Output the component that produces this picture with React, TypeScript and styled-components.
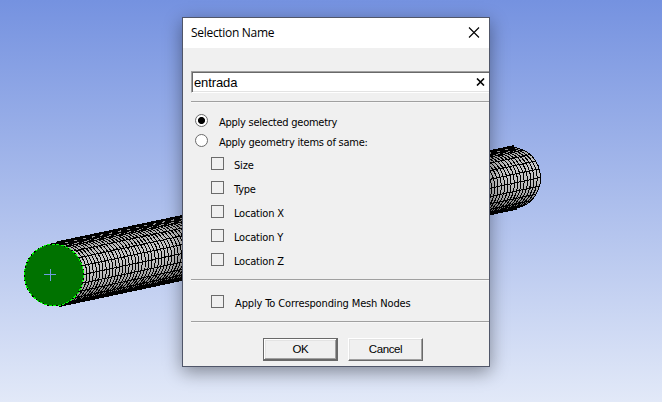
import React, { useState } from 'react';
import styled, { createGlobalStyle } from 'styled-components';

const GlobalStyle = createGlobalStyle`
  * { box-sizing: border-box; }
  body { margin: 0; overflow: hidden; }
`;

const Viewport = styled.main`
  position: relative;
  width: 662px;
  height: 402px;
  overflow: hidden;
  background: linear-gradient(#7592e0, #e2e9f8);
`;

const Scene = styled.svg`
  display: block;
`;

const Dialog = styled.section`
  position: absolute;
  left: 182px;
  top: 17px;
  width: 308px;
  height: 350px;
  display: flex;
  flex-direction: column;
  border: 1px solid #505669;
  background: #f0f0f0;
  color: #000;
  box-shadow: 0 5px 17px rgba(0, 0, 0, 0.4);
  font: 11px/14px 'DejaVu Sans Condensed', 'DejaVu Sans', sans-serif;
  font-stretch: condensed;
`;

const TitleBar = styled.header`
  display: flex;
  align-items: center;
  justify-content: space-between;
  height: 30px;
  padding: 0 9px 0 8px;
  background: #fff;
`;

const Title = styled.h1`
  margin: 0;
  font: 400 12px/16px 'Open Sans', sans-serif;
  letter-spacing: -0.3px;
`;

const IconButton = styled.button`
  display: flex;
  padding: 0;
  border: 0;
  background: none;
  color: #000;
`;

const Body = styled.div`
  display: flex;
  flex-direction: column;
  padding: 23px 0 0 8px;
`;

const NameField = styled.div`
  display: flex;
  align-items: center;
  height: 22px;
  padding: 0 4px 0 1px;
  background: #fff;
  border-style: solid;
  border-color: #a0a0a0 #fff #fff #a0a0a0;
  border-width: 1px 0 1px 1px;
  box-shadow: inset 1px 1px #696969, inset 0 -1px #e3e3e3;
`;

const NameInput = styled.input`
  flex: 1;
  min-width: 0;
  padding: 1px 0 0 1px;
  border: 0;
  outline: 0;
  background: transparent;
  color: #000;
  font: 13px/16px 'Liberation Sans', Arial, sans-serif;
  letter-spacing: -0.12px;
`;

const Rule = styled.hr<{ $gap: number }>`
  width: 100%;
  height: 2px;
  margin: ${(p) => p.$gap}px 0 0;
  border: 0;
  border-top: 1px solid #a0a0a0;
  background: #f7f7f7;
`;

const RadioList = styled.div`
  display: flex;
  flex-direction: column;
  padding: 11px 0 0 4px;
`;

const CheckList = styled.div<{ $top: number }>`
  display: flex;
  flex-direction: column;
  gap: 11px;
  padding: ${(p) => p.$top}px 0 0 20px;
`;

const Option = styled.label<{ $height: number; $gap: number }>`
  display: flex;
  align-items: flex-start;
  gap: ${(p) => p.$gap}px;
  height: ${(p) => p.$height}px;
`;

const OptionText = styled.span<{ $spacing: number }>`
  padding-top: 2px;
  white-space: nowrap;
  letter-spacing: ${(p) => p.$spacing}px;
`;

const RadioMark = styled.input`
  appearance: none;
  width: 13px;
  height: 13px;
  margin: 0;
  border: 1px solid #6b6b6b;
  border-radius: 50%;
  background: #fff;
  &:checked {
    background: radial-gradient(circle, #000 3.1px, #fff 3.9px);
  }
`;

const CheckMark = styled.input`
  appearance: none;
  width: 13px;
  height: 13px;
  margin: 0;
  border: 1px solid #6b6b6b;
  background: #f0f0f0;
  &:checked {
    box-shadow: inset 0 0 0 2px #f0f0f0;
    background: #333;
  }
`;

const Actions = styled.footer`
  display: flex;
  gap: 10px;
  padding: 15px 0 0 72px;
`;

const PushButton = styled.button<{ $primary?: boolean }>`
  width: 75px;
  height: 23px;
  padding: 0 0 1px;
  border: 1px solid;
  border-color: ${(p) => (p.$primary ? '#696969' : '#fff #696969 #696969 #fff')};
  background: #f0f0f0;
  box-shadow: ${(p) =>
    p.$primary
      ? 'inset -1px -1px #696969, inset 1px 1px #fff, inset -2px -2px #a0a0a0, inset 2px 2px #e3e3e3'
      : 'inset -1px -1px #a0a0a0, inset 1px 1px #e3e3e3'};
  color: #000;
  font: 11.5px/14px 'Liberation Sans', Arial, sans-serif;
  letter-spacing: -0.4px;
`;

const near = { x: 54, y: 275, rx: 29.5, ry: 31 };
const far = { x: 512, y: 178, rx: 28.5, ry: 30.5 };
const RINGS = 140;
const SEGMENTS = 22;

const pointAt = (t: number, a: number) => {
  const mix = (u: number, v: number) => u + (v - u) * t;
  const x = mix(near.x, far.x) + mix(near.rx, far.rx) * Math.cos(a);
  const y = mix(near.y, far.y) + mix(near.ry, far.ry) * Math.sin(a);
  return `${x.toFixed(2)} ${y.toFixed(2)}`;
};

const START = -Math.PI / 2 - 0.22;
const END = Math.PI / 2 - 0.2;

const ringPath = Array.from({ length: RINGS + 1 }, (_, i) => {
  const points = Array.from({ length: 17 }, (_, k) => pointAt(i / RINGS, START + ((END - START) * k) / 16));
  return `M${points.join('L')}`;
}).join('');

const seamPath = Array.from({ length: 12 }, (_, i) => START + 0.06 + (i * 2 * Math.PI) / SEGMENTS)
  .filter((a) => a <= END + 0.1)
  .map((a) => `M${pointAt(0, a)}L${pointAt(1, a)}`)
  .join('');

const panels = Array.from({ length: 24 }, (_, i) => {
  const a = START + ((END - START) * i) / 24;
  const b = START + ((END - START) * (i + 1)) / 24;
  const level = Math.round(80 + 118 * Math.max(0, Math.cos(a + 0.4)));
  return {
    d: `M${pointAt(0, a)}L${pointAt(1, a)}L${pointAt(1, b)}L${pointAt(0, b)}Z`,
    fill: `rgb(${level},${level},${level})`,
  };
});

const upperEdge = `M${pointAt(0, START + 0.3)}L${pointAt(1, START + 0.3)}`;

function MeshedPipe() {
  return (
    <Scene width="662" height="402" viewBox="0 0 662 402" shapeRendering="crispEdges" aria-hidden="true">
      {panels.map((p) => (
        <path key={p.d} d={p.d} fill={p.fill} />
      ))}
      <path d={ringPath} fill="none" stroke="#000" strokeWidth="1" />
      <path d={seamPath} fill="none" stroke="#000" strokeWidth="1" />
      <path d={upperEdge} stroke="#000" strokeWidth="5" />
      <path d={upperEdge} stroke="#999" strokeWidth="1.2" strokeDasharray="3 6" transform="translate(0 .5)" />
      <path d={`M${pointAt(0, END + 0.02)}L${pointAt(1, END + 0.02)}`} stroke="#000" strokeWidth="3" />
      <ellipse cx="54" cy="275" rx="29.5" ry="30.8" fill="#007200" stroke="#000" />
      <ellipse cx="54" cy="275" rx="29.5" ry="30.8" fill="none" stroke="#00ff00" strokeDasharray="3 1.5" />
      <path d="M44 274.5H56M50.5 269V281" stroke="#6f9be0" />
    </Scene>
  );
}

const criteria = ['Size', 'Type', 'Location X', 'Location Y', 'Location Z'];

export default function App() {
  const [name, setName] = useState('entrada');
  const [mode, setMode] = useState('selected');
  return (
    <>
      <GlobalStyle />
      <Viewport>
        <MeshedPipe />
        <Dialog role="dialog" aria-label="Selection Name">
          <TitleBar>
            <Title>Selection Name</Title>
            <IconButton aria-label="Close">
              <svg width="12" height="12" viewBox="0 0 12 12">
                <path d="M1 .5L11 10.5M11 .5L1 10.5" stroke="currentColor" strokeWidth="1.1" />
              </svg>
            </IconButton>
          </TitleBar>
          <Body>
            <NameField>
              <NameInput value={name} onChange={(e) => setName(e.target.value)} aria-label="Name" spellCheck={false} />
              <IconButton aria-label="Clear" onClick={() => setName('')}>
                <svg width="9" height="8" viewBox="0 0 9 8">
                  <path d="M1 .5L8 7.5M8 .5L1 7.5" stroke="currentColor" strokeWidth="1.6" />
                </svg>
              </IconButton>
            </NameField>
            <Rule $gap={8} />
            <RadioList>
              <Option $height={20} $gap={11}>
                <RadioMark type="radio" checked={mode === 'selected'} onChange={() => setMode('selected')} />
                <OptionText $spacing={-0.25}>Apply selected geometry</OptionText>
              </Option>
              <Option $height={20} $gap={11}>
                <RadioMark type="radio" checked={mode === 'same'} onChange={() => setMode('same')} />
                <OptionText $spacing={-0.25}>Apply geometry items of same:</OptionText>
              </Option>
            </RadioList>
            <CheckList $top={3}>
              {criteria.map((label) => (
                <Option key={label} $height={13} $gap={10}>
                  <CheckMark type="checkbox" />
                  <OptionText $spacing={-0.2}>{label}</OptionText>
                </Option>
              ))}
            </CheckList>
            <Rule $gap={13} />
            <CheckList $top={14}>
              <Option $height={13} $gap={11}>
                <CheckMark type="checkbox" />
                <OptionText $spacing={-0.13}>Apply To Corresponding Mesh Nodes</OptionText>
              </Option>
            </CheckList>
            <Rule $gap={13} />
            <Actions>
              <PushButton $primary>OK</PushButton>
              <PushButton>Cancel</PushButton>
            </Actions>
          </Body>
        </Dialog>
      </Viewport>
    </>
  );
}
